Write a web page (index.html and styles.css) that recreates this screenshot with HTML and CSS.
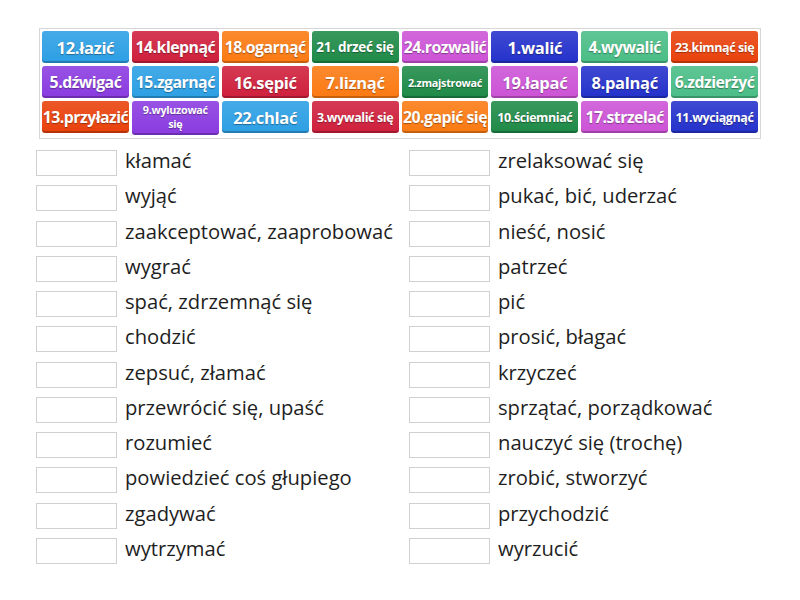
FILE: index.html
```html
<!DOCTYPE html>
<html lang="pl">
  <head>
    <meta charset="UTF-8" />
    <meta name="viewport" content="width=device-width, initial-scale=1.0" />
    <title>Dopasuj słowa</title>
    <link rel="stylesheet" href="styles.css">
  </head>
  <body>
    <div class="page">
      <!-- Word tiles to drag -->
      <div class="tiles">
        <div class="tile sky">12.łazić</div>
        <div class="tile crimson md">14.klepnąć</div>
        <div class="tile orange md">18.ogarnąć</div>
        <div class="tile green sm">21. drzeć się</div>
        <div class="tile pink md">24.rozwalić</div>
        <div class="tile blue">1.walić</div>
        <div class="tile mint md">4.wywalić</div>
        <div class="tile flame xs">23.kimnąć się</div>

        <div class="tile violet md">5.dźwigać</div>
        <div class="tile sky md">15.zgarnąć</div>
        <div class="tile crimson">16.sępić</div>
        <div class="tile orange">7.liznąć</div>
        <div class="tile green xxs">2.zmajstrować</div>
        <div class="tile pink">19.łapać</div>
        <div class="tile blue">8.palnąć</div>
        <div class="tile mint md">6.zdzierżyć</div>

        <div class="tile flame md">13.przyłazić</div>
        <div class="tile violet xxs two">9.wyluzować<br />się</div>
        <div class="tile sky">22.chlać</div>
        <div class="tile crimson xs">3.wywalić się</div>
        <div class="tile orange md">20.gapić się</div>
        <div class="tile green xs">10.ściemniać</div>
        <div class="tile pink md">17.strzelać</div>
        <div class="tile blue xs">11.wyciągnąć</div>
      </div>

      <!-- Drop targets with meanings -->
      <div class="answers">
        <div class="row"><span class="slot"></span><span class="word">kłamać</span></div>
        <div class="row"><span class="slot"></span><span class="word">zrelaksować się</span></div>
        <div class="row"><span class="slot"></span><span class="word">wyjąć</span></div>
        <div class="row"><span class="slot"></span><span class="word">pukać, bić, uderzać</span></div>
        <div class="row"><span class="slot"></span><span class="word">zaakceptować, zaaprobować</span></div>
        <div class="row"><span class="slot"></span><span class="word">nieść, nosić</span></div>
        <div class="row"><span class="slot"></span><span class="word">wygrać</span></div>
        <div class="row"><span class="slot"></span><span class="word">patrzeć</span></div>
        <div class="row"><span class="slot"></span><span class="word">spać, zdrzemnąć się</span></div>
        <div class="row"><span class="slot"></span><span class="word">pić</span></div>
        <div class="row"><span class="slot"></span><span class="word">chodzić</span></div>
        <div class="row"><span class="slot"></span><span class="word">prosić, błagać</span></div>
        <div class="row"><span class="slot"></span><span class="word">zepsuć, złamać</span></div>
        <div class="row"><span class="slot"></span><span class="word">krzyczeć</span></div>
        <div class="row"><span class="slot"></span><span class="word">przewrócić się, upaść</span></div>
        <div class="row"><span class="slot"></span><span class="word">sprzątać, porządkować</span></div>
        <div class="row"><span class="slot"></span><span class="word">rozumieć</span></div>
        <div class="row"><span class="slot"></span><span class="word">nauczyć się (trochę)</span></div>
        <div class="row"><span class="slot"></span><span class="word">powiedzieć coś głupiego</span></div>
        <div class="row"><span class="slot"></span><span class="word">zrobić, stworzyć</span></div>
        <div class="row"><span class="slot"></span><span class="word">zgadywać</span></div>
        <div class="row"><span class="slot"></span><span class="word">przychodzić</span></div>
        <div class="row"><span class="slot"></span><span class="word">wytrzymać</span></div>
        <div class="row"><span class="slot"></span><span class="word">wyrzucić</span></div>
      </div>
    </div>
  </body>
</html>
```

FILE: styles.css
```css
/* General Styling */
body {
  margin: 0;
  padding: 0;
  background: #fff;
  font-family: "Open Sans", "Noto Sans", sans-serif;
  color: #222;
}

.page {
  width: 746px;
  padding: 28px 0 0 36px;
}

/* Tile Tray */
.tiles {
  width: 716px;
  margin-left: 3px;
  padding: 2px 2px 3px 2px;
  border: 1px solid #d6d6d6;
  display: grid;
  grid-template-columns: repeat(8, 1fr);
  gap: 3px;
}

.tile {
  height: 32px;
  overflow: hidden;
  display: flex;
  align-items: center;
  justify-content: center;
  text-align: center;
  border-radius: 3px;
  color: #fff;
  font-weight: 700;
  font-size: 16.5px;
  letter-spacing: -0.3px;
  white-space: nowrap;
  text-shadow: 0 1px 1px rgba(0, 0, 0, 0.35);
  box-shadow: inset 0 -2px 0 rgba(0, 0, 0, 0.22);
  background-image: linear-gradient(rgba(255, 255, 255, 0.12), rgba(255, 255, 255, 0));
}

.tile.md { font-size: 15.8px; letter-spacing: -0.5px; }
.tile.sm { font-size: 13.5px; }
.tile.xs { font-size: 12.5px; letter-spacing: -0.4px; }
.tile.xxs { font-size: 10.8px; letter-spacing: -0.3px; }
.tile.two { line-height: 14px; padding-bottom: 2px; }

/* Tile colours */
.sky { background-color: #2c9fe4; }
.crimson { background-color: #cf1f3c; }
.orange { background-color: #fb7a12; }
.green { background-color: #1e8a47; }
.pink { background-color: #cc53d6; }
.blue { background-color: #2431cb; }
.mint { background-color: #4abd86; }
.flame { background-color: #e9410b; }
.violet { background-color: #8a3be0; }

/* Answer Rows */
.answers {
  margin-top: 11px;
  display: grid;
  grid-template-columns: 373px 373px;
  grid-auto-rows: 35.25px;
}

.row {
  display: flex;
  align-items: flex-start;
}

.slot {
  flex: none;
  width: 79px;
  height: 24px;
  border: 1px solid #d0d0d0;
  background: #fff;
}

.word {
  margin-left: 8px;
  font-size: 20.2px;
  line-height: 22px;
  margin-top: -1px;
  color: #1e1e1e;
  white-space: nowrap;
}
```
